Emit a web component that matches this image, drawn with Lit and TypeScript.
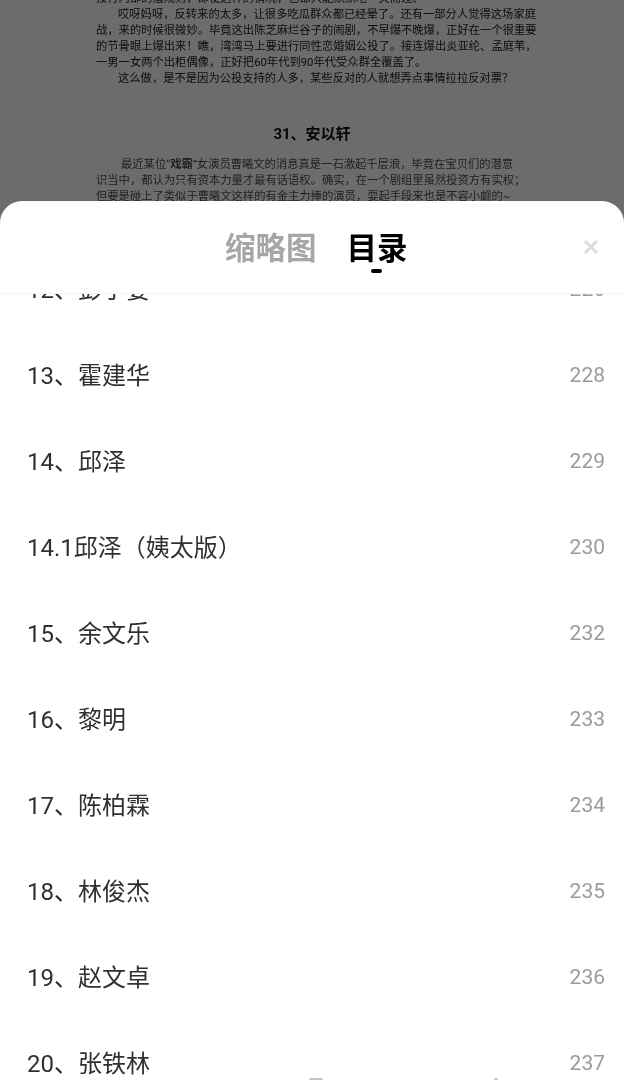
import { LitElement, html, css } from "lit";
import { customElement } from "lit/decorators.js";

const rows: [string, string, string][] = [
  ["12、", "彭于晏", "226"],
  ["13、", "霍建华", "228"],
  ["14、", "邱泽", "229"],
  ["14.1", "邱泽（姨太版）", "230"],
  ["15、", "余文乐", "232"],
  ["16、", "黎明", "233"],
  ["17、", "陈柏霖", "234"],
  ["18、", "林俊杰", "235"],
  ["19、", "赵文卓", "236"],
  ["20、", "张铁林", "237"],
];

@customElement("app-root")
export class AppRoot extends LitElement {
  static styles = css`
    :host {
      display: block;
      width: 624px;
      height: 1080px;
      overflow: hidden;
      position: relative;
      background: #6c6c6c;
      font-family: Roboto, "Noto Sans CJK SC", sans-serif;
    }
    .doc {
      height: 201px;
      overflow: hidden;
      box-sizing: border-box;
      padding: 0 88px 0 96px;
      color: #0c0c0c;
      font-size: 11.3px;
      line-height: 16px;
      filter: blur(0.35px);
    }
    .doc p {
      margin: 0;
      white-space: nowrap;
    }
    .clip {
      margin-top: -9px !important;
    }
    .in {
      padding-left: 22px;
    }
    .in2 {
      padding-left: 25px;
    }
    .soft {
      color: #1e1e1e;
    }
    .doc h2 {
      margin: 35px 0 11px;
      font-size: 15px;
      line-height: 24px;
      font-weight: 700;
      text-align: center;
      color: #050505;
      padding-right: 8px;
    }
    .sheet {
      height: 879px;
      background: #fff;
      border-radius: 22px 22px 0 0;
      display: flex;
      flex-direction: column;
      overflow: hidden;
    }
    .head {
      height: 93px;
      flex: none;
      box-sizing: border-box;
      border-bottom: 1px solid #f5f5f5;
      position: relative;
      display: flex;
      padding: 28px 0 0 225px;
      gap: 30px;
      font-size: 30.5px;
      line-height: 40px;
      font-weight: 700;
    }
    .tab {
      color: #a6a6a6;
      filter: blur(0.3px);
    }
    .tab.on {
      color: #000;
      position: relative;
    }
    .bar {
      position: absolute;
      left: 24px;
      top: 40px;
      width: 11px;
      height: 4px;
      border-radius: 2px;
      background: #000;
    }
    .close {
      position: absolute;
      left: 583px;
      top: 38px;
      width: 16px;
      height: 16px;
    }
    .list {
      flex: 1;
      overflow: hidden;
    }
    .rows {
      margin-top: -48px;
      filter: blur(0.3px);
    }
    .row {
      height: 86px;
      display: flex;
      align-items: center;
      justify-content: space-between;
      padding: 0 19px 0 27px;
      font-size: 24px;
      color: #303030;
    }
    .label {
      margin-top: -4px;
    }
    .page {
      font-size: 21px;
      color: #9b9b9b;
    }
    .spot {
      position: absolute;
      bottom: 0;
      height: 2px;
      background: #c4c4c4;
      border-radius: 3px 3px 0 0;
      filter: blur(0.5px);
    }
    .s1 {
      left: 309px;
      width: 14px;
    }
    .s2 {
      left: 494px;
      width: 4px;
    }
  `;

  render() {
    return html`
      <div class="doc">
        <p class="clip">按行内部的潜规则，即使这样的情况，也都只能默默地一笑而过。</p>
        <p class="in">哎呀妈呀，反转来的太多，让很多吃瓜群众都已经晕了。还有一部分人觉得这场家庭</p>
        <p>战，来的时候很微妙。毕竟这出陈芝麻烂谷子的闹剧，不早爆不晚爆，正好在一个很重要</p>
        <p>的节骨眼上爆出来！瞧，湾湾马上要进行同性恋婚姻公投了。接连爆出炎亚纶、孟庭苇，</p>
        <p>一男一女两个出柜偶像，正好把60年代到90年代受众群全覆盖了。</p>
        <p class="in">这么做，是不是因为公投支持的人多，某些反对的人就想弄点事情拉拉反对票？</p>
        <h2>31、安以轩</h2>
        <p class="in2 soft">最近某位“<b>戏霸</b>”女演员曹曦文的消息真是一石激起千层浪，毕竟在宝贝们的潜意</p>
        <p class="soft">识当中，都认为只有资本力量才最有话语权。确实，在一个剧组里虽然投资方有实权；</p>
        <p class="soft">但要是碰上了类似于曹曦文这样的有金主力捧的演员，耍起手段来也是不容小觑的~</p>
      </div>
      <div class="sheet">
        <div class="head">
          <span class="tab">缩略图</span>
          <span class="tab on">目录<i class="bar"></i></span>
          <svg class="close" viewBox="0 0 16 16" fill="none" stroke="#dcdcdc" stroke-width="3">
            <path d="M2 2 L14 14 M14 2 L2 14" />
          </svg>
        </div>
        <div class="list">
          <div class="rows">
            ${rows.map(
              ([n, t, p]) => html`<div class="row"><span class="label">${n}${t}</span><span class="page">${p}</span></div>`
            )}
          </div>
        </div>
      </div>
      <i class="spot s1"></i><i class="spot s2"></i>
    `;
  }
}
